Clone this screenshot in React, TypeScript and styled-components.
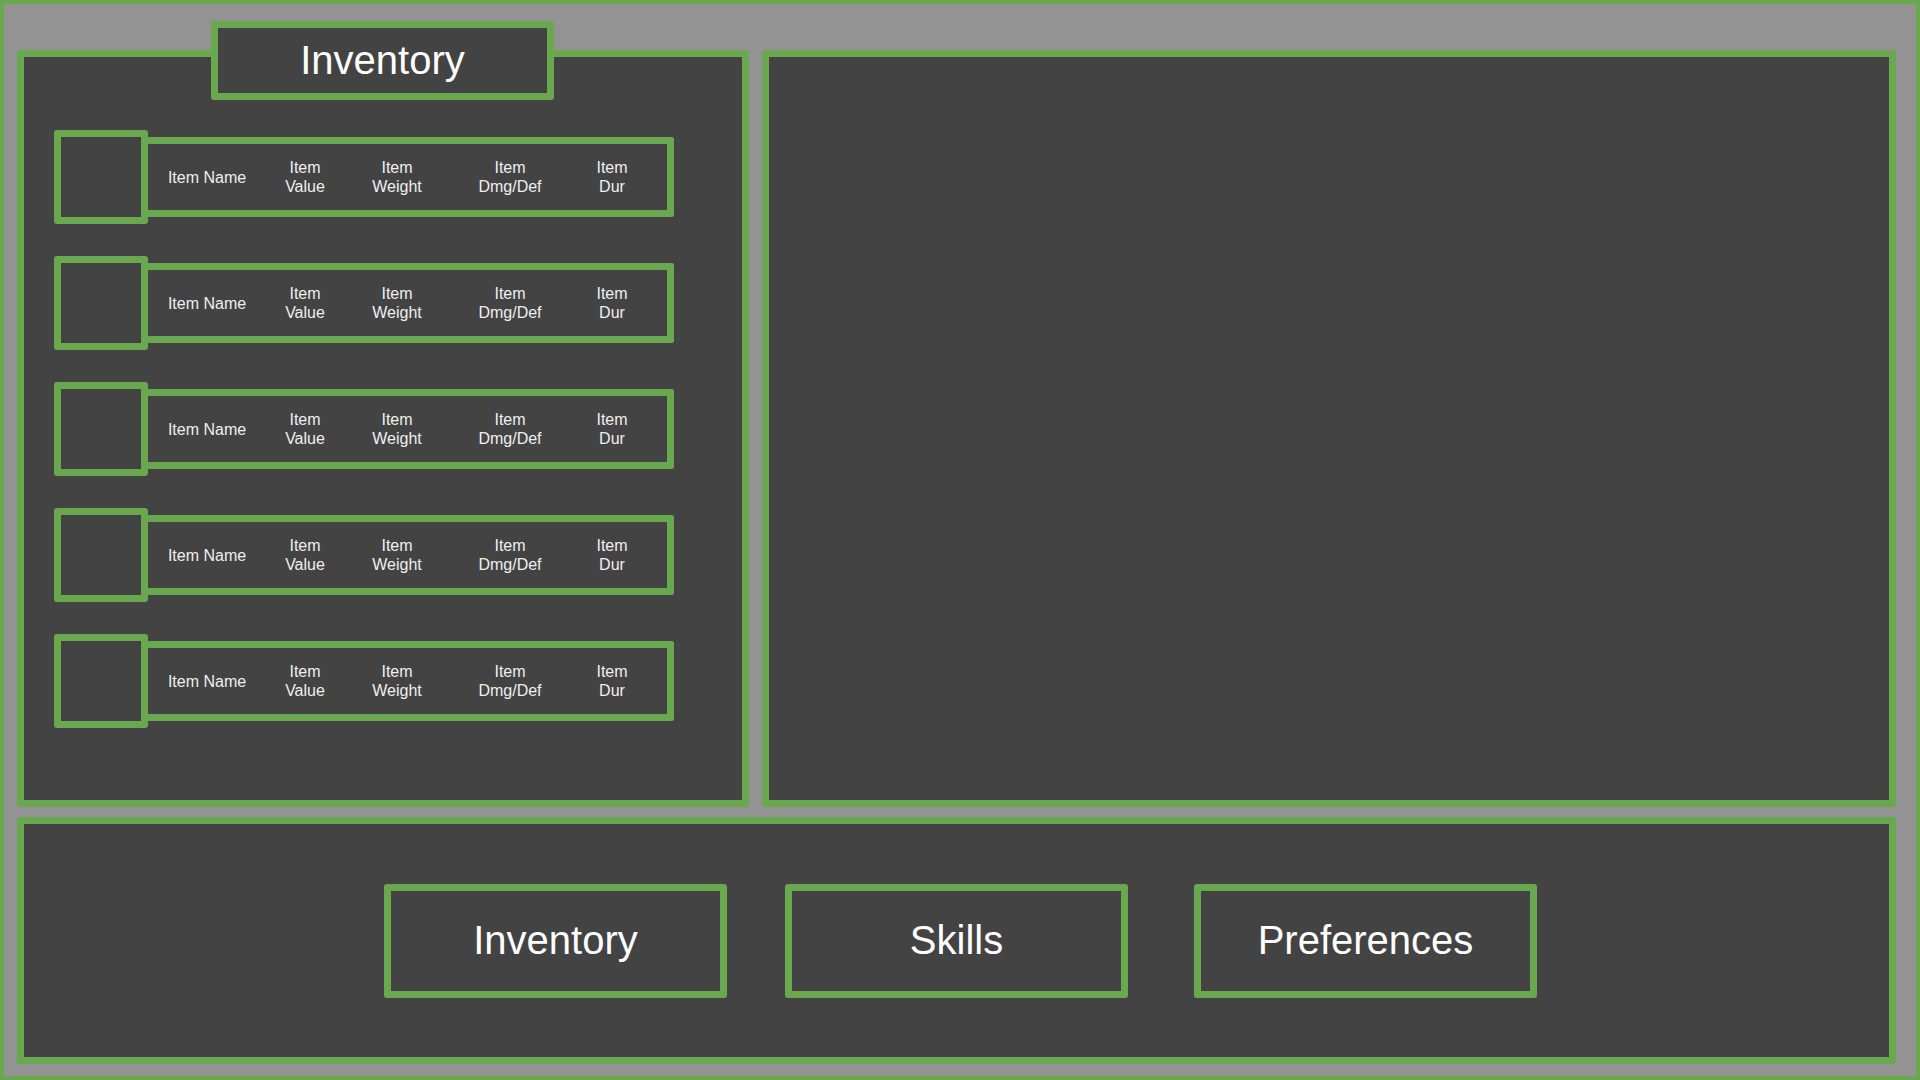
import React from 'react'
import styled, { createGlobalStyle } from 'styled-components'

const green = '#6aa84f'
const dark = '#434343'
const gray = '#939393'

const GlobalStyle = createGlobalStyle`
  html, body {
    margin: 0;
    padding: 0;
    background: ${gray};
    font-family: "Liberation Sans", Arial, sans-serif;
  }
  * { box-sizing: border-box; }
`

const Frame = styled.div`
  width: 1920px;
  height: 1080px;
  border: 4px solid ${green};
  background: ${gray};
  padding: 46px 20px 12px 13px;
  display: grid;
  grid-template-columns: 732px 1fr;
  grid-template-rows: 757px 247px;
  column-gap: 13px;
  row-gap: 10px;
`

const Panel = styled.section<{ $wide?: boolean }>`
  position: relative;
  background: ${dark};
  border: 7px solid ${green};
  border-radius: 3px;
  grid-column: ${(p) => (p.$wide ? '1 / span 2' : 'auto')};
`

const Tab = styled.div`
  position: absolute;
  left: 187px;
  top: -36px;
  width: 343px;
  height: 79px;
  background: ${dark};
  border: 7px solid ${green};
  border-radius: 3px;
  display: flex;
  align-items: center;
  justify-content: center;
  color: #ffffff;
  font-size: 40px;
`

const ItemList = styled.div`
  display: flex;
  flex-direction: column;
  gap: 32px;
  padding: 73px 0 0 30px;
`

const ItemRow = styled.div`
  display: flex;
  align-items: center;
`

const Slot = styled.div`
  width: 94px;
  height: 94px;
  border: 7px solid ${green};
  border-radius: 3px;
  background: ${dark};
`

const Details = styled.div`
  width: 526px;
  height: 80px;
  border: 7px solid ${green};
  border-left: none;
  border-radius: 0 3px 3px 0;
  display: grid;
  grid-template-columns: 118px 78px 106px 120px 84px;
  align-items: center;
  color: #efefef;
  font-size: 16px;
  line-height: 19px;
`

const Cell = styled.div`
  text-align: center;
`

const Nav = styled.div`
  height: 100%;
  display: flex;
  align-items: center;
  justify-content: center;
  gap: 58px;
  padding-left: 8px;
`

const NavButton = styled.div<{ $push?: number }>`
  width: 343px;
  height: 114px;
  margin-left: ${(p) => p.$push ?? 0}px;
  border: 7px solid ${green};
  border-radius: 3px;
  display: flex;
  align-items: center;
  justify-content: center;
  color: #ffffff;
  font-size: 40px;
`

const items = [1, 2, 3, 4, 5]

export default function App() {
  return (
    <>
      <GlobalStyle />
      <Frame>
        <Panel>
          <Tab>Inventory</Tab>
          <ItemList>
            {items.map((id) => (
              <ItemRow key={id}>
                <Slot />
                <Details>
                  <Cell>Item Name</Cell>
                  <Cell>Item<br />Value</Cell>
                  <Cell>Item<br />Weight</Cell>
                  <Cell>Item<br />Dmg/Def</Cell>
                  <Cell>Item<br />Dur</Cell>
                </Details>
              </ItemRow>
            ))}
          </ItemList>
        </Panel>
        <Panel />
        <Panel $wide>
          <Nav>
            <NavButton>Inventory</NavButton>
            <NavButton>Skills</NavButton>
            <NavButton $push={8}>Preferences</NavButton>
          </Nav>
        </Panel>
      </Frame>
    </>
  )
}
